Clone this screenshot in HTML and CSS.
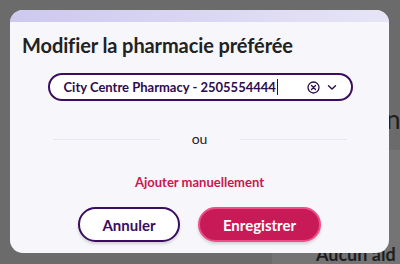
FILE: index.html
```html
<!DOCTYPE html>
<html lang="fr">
<head>
<meta charset="utf-8">
<link rel="stylesheet" href="styles.css">
</head>
<body>
<div class="backdrop">
  <div class="bg-panel"></div>
  <div class="bg-text bg-n">n</div>
  <div class="bg-text bg-aucun">Aucun aid</div>
  <div class="modal">
    <div class="strip"></div>
    <h1 class="title">Modifier la pharmacie préférée</h1>
    <div class="select">
      <span class="value">City Centre Pharmacy - 2505554444</span><span class="caret"></span>
      <span class="spacer"></span>
      <svg class="clear" width="13" height="13" viewBox="0 0 13 13"><circle cx="6.5" cy="6.5" r="5.5" fill="none" stroke="#2d0b4f" stroke-width="1.3"/><path d="M4.5 4.5 L8.5 8.5 M8.5 4.5 L4.5 8.5" stroke="#2d0b4f" stroke-width="1.3" stroke-linecap="round"/></svg>
      <svg class="chev" width="10" height="7" viewBox="0 0 10 7"><path d="M1.5 1.8 L5 5 L8.5 1.8" fill="none" stroke="#2d0b4f" stroke-width="1.4" stroke-linecap="round" stroke-linejoin="round"/></svg>
    </div>
    <div class="or"><span class="line"></span><span class="ou">ou</span><span class="line"></span></div>
    <div class="manual">Ajouter manuellement</div>
    <div class="actions">
      <button class="btn cancel">Annuler</button>
      <button class="btn save">Enregistrer</button>
    </div>
  </div>
</div>
</body>
</html>
```
FILE: styles.css
```css
html, body {
  margin: 0;
  padding: 0;
}
body {
  width: 400px;
  height: 264px;
  overflow: hidden;
  background: #6b6b6b;
  font-family: Lato, "Noto Sans", sans-serif;
}
.backdrop {
  position: relative;
  width: 400px;
  height: 264px;
  padding: 10px 0 0 10px;
  box-sizing: border-box;
  overflow: hidden;
}
.bg-panel {
  position: absolute;
  left: 272px;
  top: 150px;
  width: 128px;
  height: 114px;
  background: #747474;
}
.bg-text {
  position: absolute;
  color: #1e1e1e;
  font-weight: 700;
}
.bg-n {
  left: 386px;
  top: 103px;
  font-size: 26px;
  font-weight: 400;
}
.bg-aucun {
  left: 316px;
  top: 243px;
  font-size: 18px;
  line-height: 22px;
}
.modal {
  position: relative;
  width: 379px;
  height: 243px;
  background: #f6f6fb;
  border-radius: 13px;
  overflow: hidden;
  display: flex;
  flex-direction: column;
  align-items: center;
}
.strip {
  align-self: stretch;
  height: 12px;
  background: linear-gradient(90deg, #cdc8ee, #dcd9f3 60%, #e6e4f6);
}
.title {
  align-self: flex-start;
  margin: 10px 0 0 12px;
  font-size: 20px;
  font-weight: 700;
  color: #222;
  line-height: 26px;
  letter-spacing: -0.1px;
}
.select {
  margin-top: 15px;
  margin-left: 1px;
  width: 305px;
  height: 28px;
  box-sizing: border-box;
  border: 2px solid #3a0d60;
  border-radius: 14px;
  background: #fff;
  display: flex;
  align-items: center;
  padding: 0 14px 0 14px;
}
.value {
  font-size: 13px;
  font-weight: 700;
  color: #2d0b4f;
}
.caret {
  width: 1px;
  height: 16px;
  background: #2d0b4f;
  margin-left: 1px;
}
.spacer { flex: 1; }
.clear { margin-right: 7px; }
.or {
  margin-top: 29px;
  width: 294px;
  display: flex;
  align-items: center;
}
.line {
  flex: 1;
  height: 1px;
  background: #e6e6ee;
}
.ou {
  width: 80px;
  text-align: center;
  font-size: 14px;
  color: #222;
  line-height: 18px;
}
.manual {
  margin-top: 25px;
  font-size: 13px;
  font-weight: 700;
  color: #c8174f;
  line-height: 18px;
}
.actions {
  margin-top: 16px;
  display: flex;
  gap: 18px;
}
.btn {
  height: 35px;
  border-radius: 18px;
  font-family: Lato, "Noto Sans", sans-serif;
  font-size: 15px;
  font-weight: 700;
  box-sizing: border-box;
  padding: 0;
}
.cancel {
  width: 102px;
  background: #fff;
  border: 2px solid #3a0d60;
  color: #3a0d60;
  box-shadow: 0 2px 3px rgba(0,0,0,0.15);
}
.save {
  width: 123px;
  background: #c91a58;
  border: 2px solid #ee4f86;
  color: #fff;
  box-shadow: 0 2px 3px rgba(0,0,0,0.15);
}
```
